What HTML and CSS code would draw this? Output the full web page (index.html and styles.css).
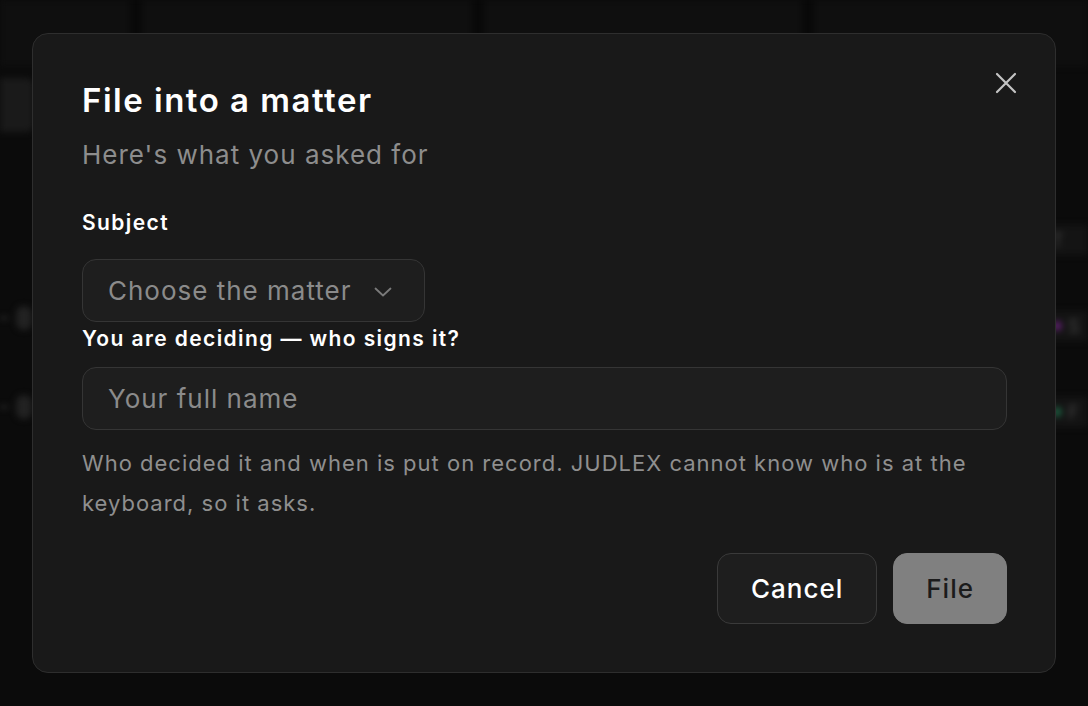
FILE: index.html
```html
<!DOCTYPE html>
<html lang="en">
<head>
<meta charset="utf-8">
<title>File into a matter</title>
<link rel="stylesheet" href="styles.css">
</head>
<body>
<div class="app">
  <div class="topbar">
    <div class="cell c1"></div>
    <div class="cell c2"></div>
    <div class="cell c3"></div>
    <div class="cell c4"></div>
  </div>
  <div class="side-item"></div>
  <div class="bg-row r1"><span class="dash"></span><span class="blob"></span></div>
  <div class="bg-row r2"><span class="dash"></span><span class="blob"></span></div>
  <div class="bg-right">
    <div class="right-row"><span class="rtext">T</span></div>
    <div class="right-row"><span class="dot purple"></span><span class="rtext">S</span></div>
    <div class="right-row"><span class="dot green"></span><span class="rtext">F</span></div>
  </div>
</div>

<div class="overlay">
  <div class="modal" role="dialog" aria-labelledby="ttl">
    <button class="close" aria-label="Close">
      <svg width="22" height="22" viewBox="0 0 22 22" fill="none" stroke="currentColor" stroke-width="2.2" stroke-linecap="round"><path d="M2 2 L20 20 M20 2 L2 20"/></svg>
    </button>
    <h2 id="ttl" class="title">File into a matter</h2>
    <p class="subtitle">Here's what you asked for</p>

    <div class="label subject-label">Subject</div>
    <div class="select">
      <span class="select-text">Choose the matter</span>
      <svg class="chev" width="18" height="10" viewBox="0 0 18 10" fill="none" stroke="currentColor" stroke-width="1.8" stroke-linecap="round" stroke-linejoin="round"><path d="M1.5 1.5 L9 8.5 L16.5 1.5"/></svg>
    </div>

    <div class="label signer-label">You are deciding — who signs it?</div>
    <div class="input"><span class="placeholder">Your full name</span></div>

    <p class="help">Who decided it and when is put on record. JUDLEX cannot know who is at the keyboard, so it asks.</p>

    <div class="actions">
      <button class="btn cancel">Cancel</button>
      <button class="btn file">File</button>
    </div>
  </div>
</div>
</body>
</html>
```

FILE: styles.css
```css
* { box-sizing: border-box; }

html, body {
  margin: 0;
  padding: 0;
  height: 100%;
}

body {
  background: #0b0b0b;
  font-family: Inter, "Noto Sans", "Liberation Sans", sans-serif;
  color: #f4f4f4;
  overflow: hidden;
}

/* blurred application behind the dialog */
.app {
  position: fixed;
  inset: 0;
  filter: blur(3px);
}

.topbar {
  display: flex;
  height: 66px;
  background: #0e0e0e;
}

.cell {
  height: 100%;
  background: #0f0f0f;
  border-right: 12px solid #080808;
}
.c1 { width: 142px; }
.c2 { width: 342px; }
.c3 { width: 330px; }
.c4 { flex: 1; border-right: none; }

.side-item {
  position: absolute;
  left: 0;
  top: 78px;
  width: 34px;
  height: 54px;
  background: #1a1a1a;
  border-radius: 0 8px 8px 0;
}

.bg-row {
  position: absolute;
  left: 0;
  display: flex;
  align-items: center;
  gap: 8px;
}
.r1 { top: 306px; }
.r2 { top: 395px; }

.dash {
  width: 8px;
  height: 2px;
  background: #3a3a3a;
}
.blob {
  width: 16px;
  height: 24px;
  border-radius: 8px;
  background: #222;
}

.bg-right {
  position: absolute;
  right: 0;
  top: 225px;
  width: 40px;
  display: flex;
  flex-direction: column;
  gap: 56px;
}
.right-row {
  display: flex;
  align-items: center;
  gap: 6px;
  height: 30px;
  padding-left: 4px;
  background: #141414;
}
.dot {
  width: 10px;
  height: 10px;
  border-radius: 50%;
}
.purple { background: #5a1f6a; }
.green { background: #1c5a3e; }
.rtext {
  font-size: 18px;
  color: #444;
}

/* overlay + dialog */
.overlay {
  position: fixed;
  inset: 0;
  display: flex;
  align-items: center;
  justify-content: center;
}

.modal {
  position: relative;
  width: 1024px;
  background: #191919;
  border: 1px solid #2e2e2e;
  border-radius: 16px;
  padding: 48px;
  display: flex;
  flex-direction: column;
}

.close {
  position: absolute;
  top: 38px;
  right: 38px;
  width: 22px;
  height: 22px;
  padding: 0;
  border: none;
  background: none;
  color: #c4c4c4;
  display: flex;
}

.title {
  margin: 0;
  padding-left: 1px;
  font-size: 33px;
  line-height: 36px;
  font-weight: 600;
  letter-spacing: 1.5px;
  color: #ffffff;
}

.subtitle {
  margin: 19px 0 0;
  padding-left: 1px;
  font-size: 26px;
  line-height: 36px;
  font-weight: 400;
  letter-spacing: 1px;
  color: #8d8d8d;
}

.label {
  padding-left: 1px;
  font-size: 21px;
  line-height: 28px;
  font-weight: 600;
  letter-spacing: 1.4px;
  color: #ffffff;
}
.subject-label { margin-top: 36px; }
.signer-label { margin-top: 3px; }

.select {
  margin-top: 22px;
  margin-left: 1px;
  align-self: flex-start;
  height: 63px;
  display: flex;
  align-items: center;
  gap: 22px;
  padding: 0 32px 0 25px;
  background: #1e1e1e;
  border: 1px solid #353535;
  border-radius: 14px;
}
.select-text {
  font-size: 26px;
  letter-spacing: 1px;
  color: #8b8b8b;
}
.chev {
  color: #7a7a7a;
  margin-top: 2px;
}

.input {
  margin-top: 14px;
  margin-left: 1px;
  height: 63px;
  display: flex;
  align-items: center;
  padding: 0 25px;
  background: #1e1e1e;
  border: 1px solid #353535;
  border-radius: 14px;
}
.placeholder {
  font-size: 26px;
  letter-spacing: 1px;
  color: #8b8b8b;
}

.help {
  margin: 13px 0 0;
  padding-left: 1px;
  font-size: 22px;
  line-height: 40px;
  letter-spacing: 1px;
  color: #8f8f8f;
}

.actions {
  margin-top: 30px;
  display: flex;
  justify-content: flex-end;
  gap: 16px;
}

.btn {
  height: 71px;
  border-radius: 14px;
  font-family: inherit;
  font-size: 26px;
  font-weight: 500;
  letter-spacing: 1px;
  padding: 0 33px;
}
.cancel {
  background: #1e1e1e;
  border: 1px solid #3a3a3a;
  color: #ffffff;
}
.file {
  background: #808080;
  border: 1px solid #808080;
  color: #1b1b1b;
  padding: 0 32px;
}
```
